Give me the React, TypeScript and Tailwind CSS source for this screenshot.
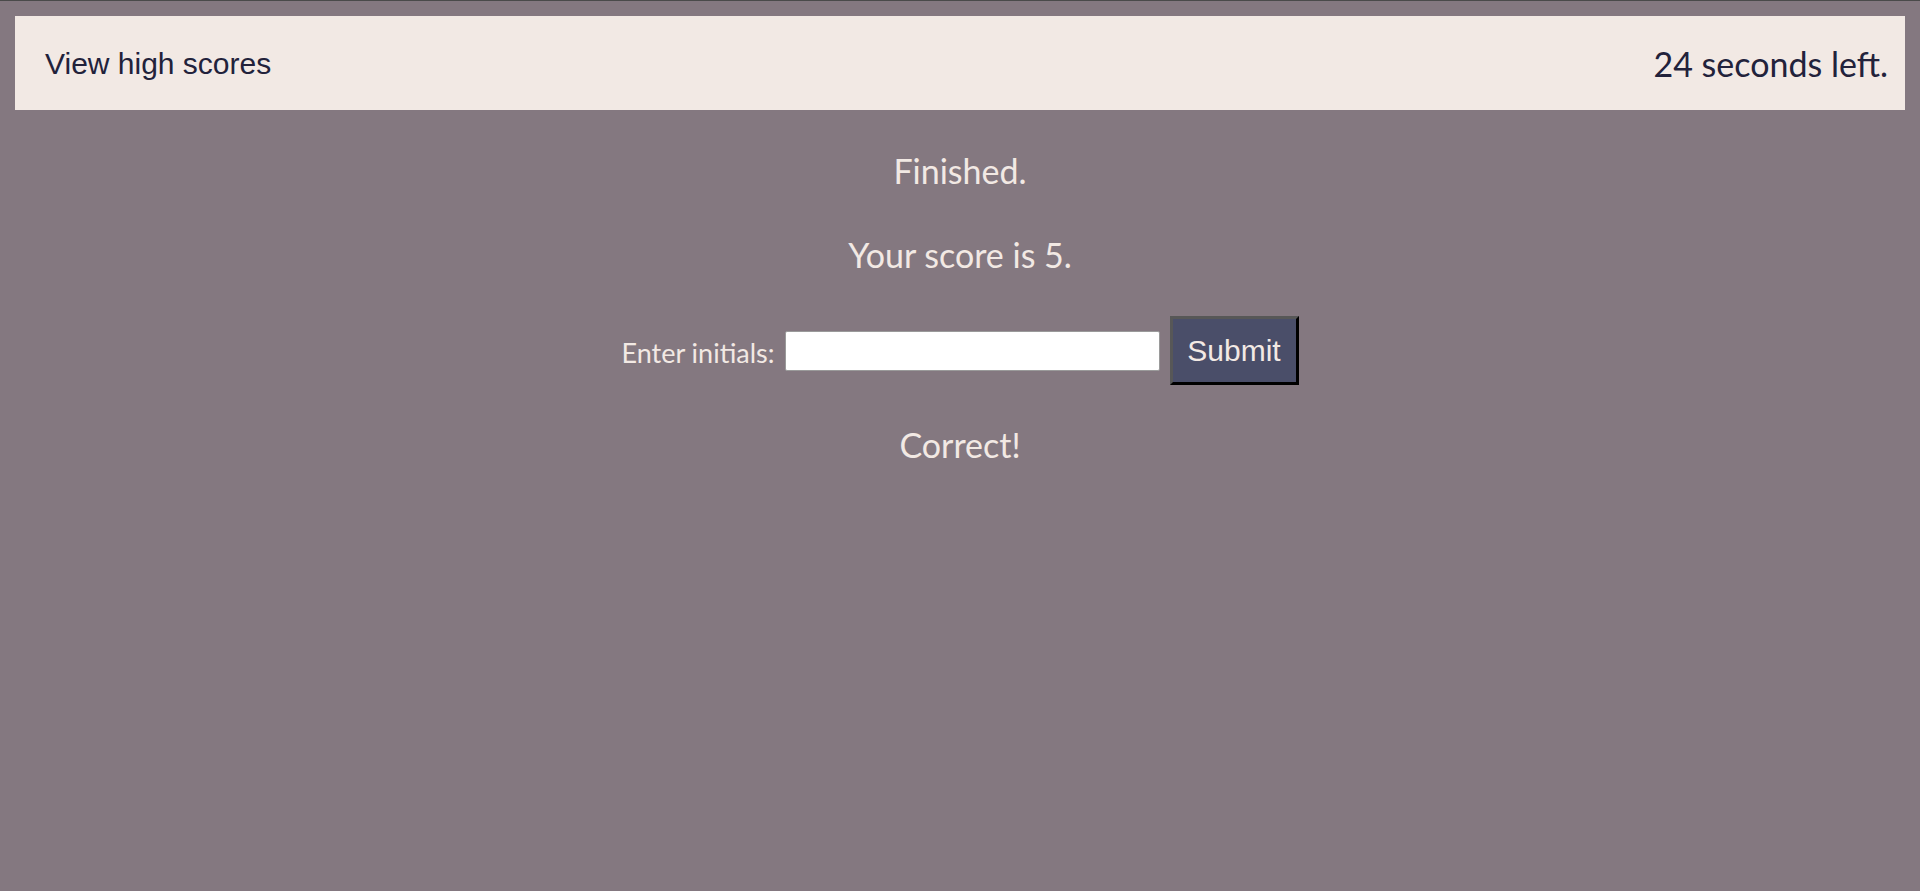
import React from "react";

export default function App() {
  return (
    <div className="min-h-screen bg-[#847880] border-t border-[#4a4a4a] px-[15px] pt-[15px] font-['Lato',sans-serif]">
      <header className="flex h-[94px] items-center justify-between bg-[#f2e9e4] pl-[30px] pr-[17px] text-[#22223b]">
        <a className="font-['Liberation_Sans',Arial,sans-serif] text-[30px]" href="#">
          View high scores
        </a>
        <p className="text-[34px]">24 seconds left.</p>
      </header>

      <main className="flex flex-col items-center text-[#f2e9e4]">
        <h2 className="mt-[41px] text-[34px] leading-[40px]">Finished.</h2>
        <p className="mt-[44px] text-[34px] leading-[40px]">Your score is 5.</p>

        <form className="mt-[41px] flex items-center gap-[10px]">
          <label className="mt-[6px] text-[27px]" htmlFor="initials">
            Enter initials:
          </label>
          <input
            id="initials"
            type="text"
            className="h-[40px] w-[375px] rounded-[2px] border border-[#9a9a9a] bg-white px-2 text-[20px] text-black"
          />
          <button
            type="button"
            className="h-[69px] w-[129px] border-[3px] border-t-[#575757] border-l-[#575757] border-b-black border-r-black bg-[#4a4e69] font-['Liberation_Sans',Arial,sans-serif] text-[30px] text-[#f2e9e4]"
          >
            Submit
          </button>
        </form>

        <p className="mt-[40px] text-[34px] leading-[40px]">Correct!</p>
      </main>
    </div>
  );
}
